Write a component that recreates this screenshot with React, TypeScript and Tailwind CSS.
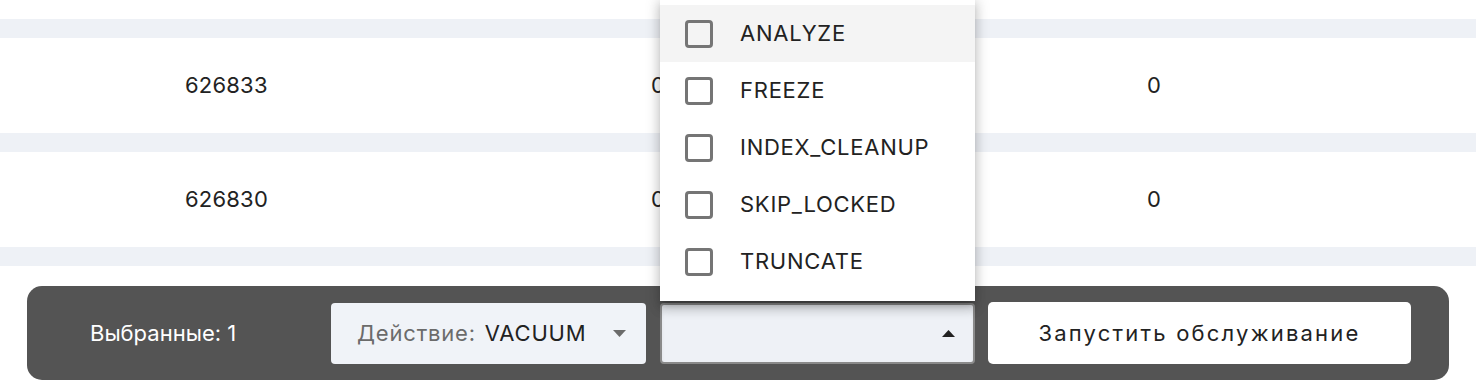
import React from 'react';

const rows = [
  { id: '626833', a: '0', b: '0' },
  { id: '626830', a: '0', b: '0' },
  { id: '', a: '', b: '' },
];

const options = ['ANALYZE', 'FREEZE', 'INDEX_CLEANUP', 'SKIP_LOCKED', 'TRUNCATE'];

const Caret: React.FC<{ up?: boolean; color: string }> = ({ up, color }) => (
  <svg width="13" height="7" viewBox="0 0 13 7">
    <path d={up ? 'M0 7 L6.5 0 L13 7 Z' : 'M0 0 L13 0 L6.5 7 Z'} fill={color} />
  </svg>
);

const App: React.FC = () => {
  return (
    <div className="relative w-[1476px] h-[386px] overflow-hidden bg-white font-['Inter',sans-serif] text-[#222]">
      {/* table */}
      <div className="h-[19px]" />
      {rows.map((r, i) => (
        <div key={i}>
          <div className="h-[19px] bg-[#eef1f6]" />
          <div className="h-[95px] flex items-center text-[22px] tracking-[0.2px] bg-white">
            <div className="w-[185px]" />
            <div className="w-[466px]">{r.id}</div>
            <div className="w-[496px]">{r.a}</div>
            <div>{r.b}</div>
          </div>
        </div>
      ))}

      {/* action bar */}
      <div className="absolute left-[27px] top-[286px] w-[1422px] h-[94px] rounded-[15px] bg-[#545454] flex items-center pl-[63px]">
        <div className="w-[241px] text-white text-[22px]">Выбранные: 1</div>
        <div className="w-[315px] h-[61px] rounded-[4px] bg-[#f0f3f8] flex items-center pl-[26px] pr-[20px] text-[22px]">
          <span className="text-[#6b6b6b] tracking-[0.8px]">Действие:</span>
          <span className="ml-[9px] tracking-[0.8px]">VACUUM</span>
          <span className="ml-auto flex"><Caret color="#6b6b6b" /></span>
        </div>
        <div className="ml-[14px] w-[315px] h-[61px] rounded-[4px] border-2 border-[#8a8a8a] bg-[#eef1f6] shadow-[inset_0_3px_4px_rgba(0,0,0,0.06)] flex items-center justify-end pr-[18px]">
          <Caret up color="#222" />
        </div>
        <button className="ml-[13px] w-[423px] h-[62px] rounded-[5px] bg-white text-[22px] tracking-[2.2px] text-[#222]">
          Запустить обслуживание
        </button>
      </div>

      {/* dropdown menu */}
      <div className="absolute left-[660px] top-[-3px] w-[315px] h-[304px] bg-white pt-[8px] shadow-[0_5px_5px_-3px_rgba(0,0,0,0.2),0_8px_10px_1px_rgba(0,0,0,0.14),0_3px_14px_2px_rgba(0,0,0,0.12)]">
        {options.map((o, i) => (
          <div key={o} className={`h-[57px] flex items-center pl-[25px] ${i === 0 ? 'bg-[#f4f4f4]' : ''}`}>
            <div className="w-[28px] h-[28px] rounded-[4px] border-[3px] border-[#757575]" />
            <span className="ml-[27px] text-[22px] tracking-[0.75px] text-[#222]">{o}</span>
          </div>
        ))}
      </div>
    </div>
  );
};

export default App;
